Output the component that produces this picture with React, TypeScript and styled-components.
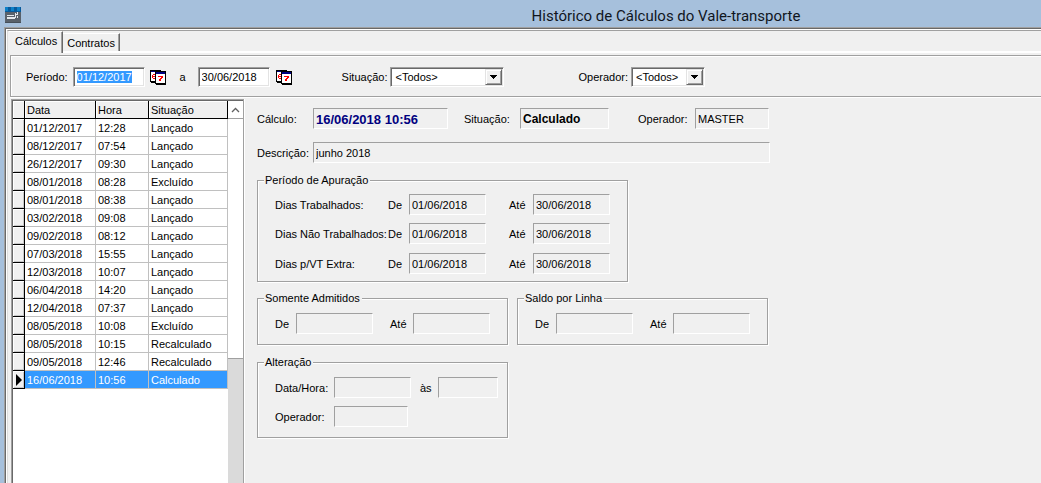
import React, { useEffect, useRef, useState } from "react";
import styled, { createGlobalStyle, css } from "styled-components";

const face = "#f0f0f0";
const shade = "#a0a0a0";
const dark = "#696969";

const GlobalStyle = createGlobalStyle`
  * { box-sizing: border-box; }
  body {
    margin: 0;
    background: ${face};
    color: #000;
    font: 11px/13px "Liberation Sans", Arial, sans-serif;
  }
  button, input, select { font: inherit; color: inherit; }
  ::selection { background: #3399ff; color: #fff; }
`;

const Window = styled.div`
  display: flex;
  flex-direction: column;
  min-height: 100vh;
  padding-left: 4px;
  background: #a6c0dc;
`;

const TitleBar = styled.header`
  display: flex;
  align-items: center;
  height: 27px;
  padding: 3px 0 0 1px;
`;

const Title = styled.h1`
  flex: 1;
  margin: 0;
  padding: 1px 0 0 270px;
  font: 15px/20px Roboto, "Open Sans", sans-serif;
  text-align: center;
  color: #10161e;
`;

const Frame = styled.div`
  display: flex;
  flex: 1;
  flex-direction: column;
  padding: 1px 0 0 1px;
  border: solid ${shade};
  border-width: 1px 0 0 1px;
  background: ${face};
  box-shadow: inset 1px 1px ${dark}, inset 2px 2px #fff;
`;

const TabPage = styled.div`
  display: flex;
  flex: 1;
  flex-direction: column;
  margin: 1px 0 0 1px;
  padding: 0 0 0 1px;
  border: solid ${shade};
  border-width: 1px 0 0 1px;
  border-left-color: #dcdcdc;
`;

const TabStrip = styled.nav`
  display: flex;
  align-items: flex-end;
  height: 22px;
  border-bottom: 2px solid #fff;
`;

const Tab = styled.button<{ $active: boolean }>`
  height: ${(p) => (p.$active ? 22 : 18)}px;
  margin-bottom: ${(p) => (p.$active ? -2 : 0)}px;
  padding: ${(p) => (p.$active ? "0 5px 2px 6px" : "1px 4px 0")};
  border: solid #fff;
  border-width: 1px 1px 0 0;
  border-right-color: ${dark};
  background: ${face};
  box-shadow: inset -1px 0 ${shade};
`;

const Toolbar = styled.form`
  display: flex;
  align-items: center;
  height: 42px;
  margin: 2px 0 0 1px;
  padding: 2px 0 0 15px;
  border: solid ${shade};
  border-width: 1px 0 1px 1px;
  box-shadow: inset 1px 1px #fff, 0 1px #fff;
`;

const Group = styled.div<{ $gap: number; $after?: number }>`
  display: flex;
  align-items: center;
  gap: ${(p) => p.$gap}px;
  margin-right: ${(p) => p.$after ?? 0}px;
`;

const sunken = css`
  border: 1px solid;
  border-color: ${shade} #fff #fff ${shade};
  border-radius: 0;
  background: #fff;
  box-shadow: inset 1px 1px ${dark}, inset -1px -1px #e3e3e3;
  outline: none;
`;

const DateInput = styled.input`
  ${sunken}
  width: 72px;
  height: 20px;
  padding: 0 3px 1px;
`;

const IconButton = styled.button`
  display: flex;
  padding: 0;
  border: 0;
  background: none;
`;

const Combo = styled.span<{ $width: number }>`
  position: relative;
  display: block;
  width: ${(p) => p.$width}px;
`;

const Select = styled.select`
  ${sunken}
  display: block;
  width: 100%;
  height: 20px;
  padding: 0 18px 0 4px;
  appearance: none;
`;

const ComboArrow = styled.span`
  position: absolute;
  top: 2px;
  right: 2px;
  display: flex;
  align-items: center;
  justify-content: center;
  width: 17px;
  height: 16px;
  border: 1px solid;
  border-color: #e3e3e3 ${dark} ${dark} #e3e3e3;
  background: ${face};
  box-shadow: inset 1px 1px #fff, inset -1px -1px ${shade};
  pointer-events: none;
`;

const Main = styled.main`
  display: flex;
  flex: 1;
  align-items: stretch;
  margin-left: 2px;
  padding-top: 2px;
`;

const GridPane = styled.section`
  display: flex;
  flex: none;
  width: 233px;
  padding: 1px 0 0 1px;
  border: solid ${shade};
  border-width: 1px 1px 0 1px;
  background: #fff;
  box-shadow: inset 1px 1px ${dark}, 1px 0 #fff;
`;

const Table = styled.table`
  flex: 1;
  align-self: flex-start;
  table-layout: fixed;
  border-collapse: separate;
  border-spacing: 0;
`;

const HeadCell = styled.th<{ $width?: number }>`
  width: ${(p) => (p.$width ? p.$width + "px" : "auto")};
  height: 18px;
  padding: 1px 0 0 2px;
  border: solid #000;
  border-width: 0 1px 1px 0;
  background: ${face};
  box-shadow: inset 1px 1px #fff;
  font-weight: normal;
  text-align: left;
`;

const Marker = styled.td`
  height: 18px;
  padding: 0 0 0 2px;
  border: solid #000;
  border-width: 0 1px 1px 0;
  background: ${face};
  box-shadow: inset 1px 1px #fff, inset -1px -1px #c8c8c8;
  line-height: 0;
`;

const Cell = styled.td`
  height: 18px;
  padding: 1px 0 0 2px;
  border: solid #c0c0c0;
  border-width: 0 1px 1px 0;
`;

const Row = styled.tr<{ $selected: boolean }>`
  ${(p) => p.$selected && `${Cell} { background: #3399ff; color: #fff; }`}
`;

const ScrollBar = styled.div`
  display: flex;
  flex: none;
  flex-direction: column;
  width: 15px;
  background: #dadada;
`;

const ScrollUp = styled.button`
  display: flex;
  align-items: center;
  justify-content: center;
  height: 18px;
  padding: 0;
  border: 0;
  border-bottom: 1px solid ${shade};
  background: #fff;
`;

const Thumb = styled.div`
  height: 240px;
  border-bottom: 1px solid ${shade};
  background: #fff;
`;

const Details = styled.section`
  flex: 1;
  padding: 9px 12px 12px 13px;
`;

const Line = styled.div<{ $after?: number }>`
  display: flex;
  align-items: center;
  margin-bottom: ${(p) => p.$after ?? 0}px;
`;

const Label = styled.label<{ $width?: number }>`
  flex: none;
  width: ${(p) => (p.$width ? p.$width + "px" : "auto")};
  padding-top: 1px;
  white-space: nowrap;
`;

const Value = styled.input<{ $width: number; $after?: number; $size?: number; $color?: string }>`
  width: ${(p) => p.$width}px;
  height: 21px;
  margin-right: ${(p) => p.$after ?? 0}px;
  padding: 1px 2px 0;
  border: 1px solid;
  border-color: ${shade} #fff #fff ${shade};
  background: ${face};
  color: ${(p) => p.$color ?? "#000"};
  outline: none;
  ${(p) => p.$size && `font-size: ${p.$size}px; font-weight: bold;`}
`;

const Boxes = styled.div`
  display: flex;
  gap: 9px;
  margin-bottom: 11px;
`;

const Box = styled.fieldset<{ $width: number; $top: number; $bottom: number; $after?: number }>`
  width: ${(p) => p.$width}px;
  margin: 0 0 ${(p) => p.$after ?? 0}px;
  padding: ${(p) => p.$top}px 0 ${(p) => p.$bottom}px 17px;
  border: 1px solid ${shade};
  box-shadow: inset 1px 1px #fff, 1px 1px #fff;
`;

const Legend = styled.legend`
  margin-left: -11px;
  padding: 0 2px 0 1px;
  background: ${face};
`;

const AppIcon = () => (
  <svg width="16" height="16" shapeRendering="crispEdges" aria-hidden="true">
    <rect width="16" height="16" fill="#46505a" />
    <rect y="5" width="16" height="10" fill="#59616a" />
    <rect width="16" height="5" fill="#075a9c" />
    <path d="M0 0h3v4H0zM6 0h3v4H6zM12 0h3v4h-3z" fill="#0c80c8" />
    <path d="M2 8h7v1H2zM2 10h8v2H2zM10 6h1v5h-1zM12 5h1v2h-1zM11 7h2v1h-2zM12 9h1v2h-1z" fill="#e4e8ec" />
  </svg>
);

const CalendarIcon = () => (
  <svg width="16" height="15" shapeRendering="crispEdges" aria-hidden="true">
    <path d="M0 0h11v13H1v-1H0z" fill="#000" />
    <rect x="1" y="1" width="9" height="1" fill="#000080" />
    <rect x="1" y="2" width="9" height="9" fill="#fff" />
    <path d="M3 4h2v1H3zM2 5h1v3H2zM3 6h2v1H3zM3 8h2v1H3z" fill="#f00" />
    <path d="M5 1h11v14H6v-1H5z" fill="#000" />
    <rect x="6" y="2" width="9" height="2" fill="#000080" />
    <rect x="6" y="4" width="9" height="9" fill="#fff" />
    <path d="M8 6h5v2h-1v1h-1v2H9V9h1V8h1V7H8z" fill="#f00" />
  </svg>
);

const Arrow = () => (
  <ComboArrow>
    <svg width="7" height="4" shapeRendering="crispEdges" aria-hidden="true">
      <path d="M0 0h7v1H6v1H5v1H4v1H3V3H2V2H1V1H0z" />
    </svg>
  </ComboArrow>
);

const rows = [
  ["01/12/2017", "12:28", "Lançado"],
  ["08/12/2017", "07:54", "Lançado"],
  ["26/12/2017", "09:30", "Lançado"],
  ["08/01/2018", "08:28", "Excluído"],
  ["08/01/2018", "08:38", "Lançado"],
  ["03/02/2018", "09:08", "Lançado"],
  ["09/02/2018", "08:12", "Lançado"],
  ["07/03/2018", "15:55", "Lançado"],
  ["12/03/2018", "10:07", "Lançado"],
  ["06/04/2018", "14:20", "Lançado"],
  ["12/04/2018", "07:37", "Lançado"],
  ["08/05/2018", "10:08", "Excluído"],
  ["08/05/2018", "10:15", "Recalculado"],
  ["09/05/2018", "12:46", "Recalculado"],
  ["16/06/2018", "10:56", "Calculado"],
];

const periods = [
  { id: "trab", label: "Dias Trabalhados:", after: 8 },
  { id: "ntrab", label: "Dias Não Trabalhados:", after: 9 },
  { id: "vt", label: "Dias p/VT Extra:", after: 0 },
];

const RangeBox = ({ id, title }: { id: string; title: string }) => (
  <Box $width={251} $top={8} $bottom={10}>
    <Legend>{title}</Legend>
    <Line>
      <Label $width={21} htmlFor={id + "-de"}>De</Label>
      <Value id={id + "-de"} $width={77} $after={17} readOnly />
      <Label $width={23} htmlFor={id + "-ate"}>Até</Label>
      <Value id={id + "-ate"} $width={77} readOnly />
    </Line>
  </Box>
);

export default function App() {
  const [tab, setTab] = useState(0);
  const [selected, setSelected] = useState(rows.length - 1);
  const start = useRef<HTMLInputElement>(null);

  useEffect(() => {
    start.current?.focus();
    start.current?.select();
  }, []);

  return (
    <Window>
      <GlobalStyle />
      <TitleBar>
        <AppIcon />
        <Title>Histórico de Cálculos do Vale-transporte</Title>
      </TitleBar>
      <Frame>
        <TabPage>
          <TabStrip>
            {["Cálculos", "Contratos"].map((name, i) => (
              <Tab key={name} type="button" $active={tab === i} onClick={() => setTab(i)}>
                {name}
              </Tab>
            ))}
          </TabStrip>
          <Toolbar>
            <Group $gap={5} $after={14}>
              <Label htmlFor="inicio">Período:</Label>
              <DateInput id="inicio" ref={start} defaultValue="01/12/2017" />
              <IconButton type="button" aria-label="Escolher data inicial"><CalendarIcon /></IconButton>
            </Group>
            <Group $gap={6} $after={50}>
              <Label $width={12} htmlFor="fim">a</Label>
              <DateInput id="fim" defaultValue="30/06/2018" />
              <IconButton type="button" aria-label="Escolher data final"><CalendarIcon /></IconButton>
            </Group>
            <Group $gap={3} $after={74}>
              <Label htmlFor="situacao">Situação:</Label>
              <Combo $width={114}>
                <Select id="situacao"><option>&lt;Todos&gt;</option></Select>
                <Arrow />
              </Combo>
            </Group>
            <Group $gap={3}>
              <Label htmlFor="operador">Operador:</Label>
              <Combo $width={74}>
                <Select id="operador"><option>&lt;Todos&gt;</option></Select>
                <Arrow />
              </Combo>
            </Group>
          </Toolbar>
          <Main>
            <GridPane>
              <Table>
                <thead>
                  <tr>
                    <HeadCell $width={12} aria-label="Linha atual" />
                    <HeadCell $width={71}>Data</HeadCell>
                    <HeadCell $width={53}>Hora</HeadCell>
                    <HeadCell>Situação</HeadCell>
                  </tr>
                </thead>
                <tbody>
                  {rows.map((row, i) => (
                    <Row key={i} $selected={i === selected} onClick={() => setSelected(i)}>
                      <Marker>
                        {i === selected && (
                          <svg width="7" height="12" aria-hidden="true"><path d="M1 0l6 6-6 6z" /></svg>
                        )}
                      </Marker>
                      {row.map((text, j) => <Cell key={j}>{text}</Cell>)}
                    </Row>
                  ))}
                </tbody>
              </Table>
              <ScrollBar>
                <ScrollUp type="button" aria-label="Rolar para cima">
                  <svg width="9" height="6" aria-hidden="true">
                    <path d="M1 5l3.500-3.500L8 5" fill="none" stroke="#606060" strokeWidth="1.300" />
                  </svg>
                </ScrollUp>
                <Thumb />
              </ScrollBar>
            </GridPane>
            <Details>
              <Line $after={13}>
                <Label $width={56} htmlFor="calculo">Cálculo:</Label>
                <Value id="calculo" $width={135} $after={16} $size={13} $color="#000080" value="16/06/2018 10:56" readOnly />
                <Label $width={56} htmlFor="sit">Situação:</Label>
                <Value id="sit" $width={89} $after={29} $size={12} value="Calculado" readOnly />
                <Label $width={57} htmlFor="oper">Operador:</Label>
                <Value id="oper" $width={74} value="MASTER" readOnly />
              </Line>
              <Line $after={11}>
                <Label $width={56} htmlFor="descricao">Descrição:</Label>
                <Value id="descricao" $width={457} value="junho 2018" readOnly />
              </Line>
              <Box $width={371} $top={7} $bottom={7} $after={10}>
                <Legend>Período de Apuração</Legend>
                {periods.map((p) => (
                  <Line key={p.id} $after={p.after}>
                    <Label $width={113} as="span">{p.label}</Label>
                    <Label $width={21} htmlFor={p.id + "-de"}>De</Label>
                    <Value id={p.id + "-de"} $width={77} $after={23} value="01/06/2018" readOnly />
                    <Label $width={24} htmlFor={p.id + "-ate"}>Até</Label>
                    <Value id={p.id + "-ate"} $width={77} value="30/06/2018" readOnly />
                  </Line>
                ))}
              </Box>
              <Boxes>
                <RangeBox id="admitidos" title="Somente Admitidos" />
                <RangeBox id="saldo" title="Saldo por Linha" />
              </Boxes>
              <Box $width={251} $top={8} $bottom={10}>
                <Legend>Alteração</Legend>
                <Line $after={8}>
                  <Label $width={59} htmlFor="alt-data">Data/Hora:</Label>
                  <Value id="alt-data" $width={77} $after={9} readOnly />
                  <Label $width={18} htmlFor="alt-hora">às</Label>
                  <Value id="alt-hora" $width={60} readOnly />
                </Line>
                <Line>
                  <Label $width={59} htmlFor="alt-oper">Operador:</Label>
                  <Value id="alt-oper" $width={74} readOnly />
                </Line>
              </Box>
            </Details>
          </Main>
        </TabPage>
      </Frame>
    </Window>
  );
}
